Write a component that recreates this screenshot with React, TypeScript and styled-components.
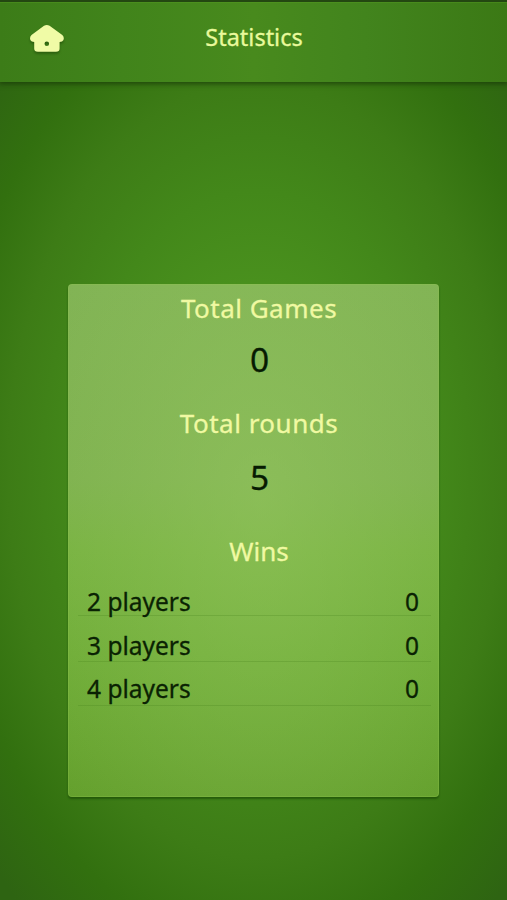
import React from "react";
import styled, { createGlobalStyle } from "styled-components";

const GlobalStyle = createGlobalStyle`
  * { box-sizing: border-box; }
  body { margin: 0; background: #3f7d18; }
`;

const Screen = styled.main`
  display: flex;
  flex-direction: column;
  width: 507px;
  height: 900px;
  overflow: hidden;
  font-family: "Noto Sans", "Open Sans", sans-serif;
  -webkit-text-stroke: 0.3px currentColor;
  background: radial-gradient(ellipse 365px 570px at 256px 470px,
    #559c25 0%, #4c941f 25%, #43881a 49%, #3d7c16 68%, #32700f 84%, #2e6412 100%);
`;

const Header = styled.header`
  display: grid;
  grid-template-columns: 94px 1fr 94px;
  flex: none;
  height: 82px;
  border-top: 2px solid #234711;
  background: linear-gradient(90deg, #3c7c18 0%, #41841b 24%, #488a1d 50%, #42841d 72%, #3b7915 100%);
  box-shadow: inset 0 1px 0 rgba(90, 160, 35, 0.35), 0 1px 5px 1px rgba(24, 55, 8, 0.75);
`;

const HomeButton = styled.button`
  display: flex;
  align-items: flex-start;
  padding: 21px 0 0 28px;
  border: 0;
  background: none;
  svg { filter: drop-shadow(0 2px 1px rgba(30, 70, 5, 0.55)); }
`;

const Title = styled.h1`
  margin: 0;
  padding: 17px 0 0 1px;
  text-align: center;
  font-size: 23.5px;
  font-weight: 400;
  line-height: 36px;
  color: #e9f99b;
`;

const Card = styled.section`
  display: flex;
  flex-direction: column;
  width: 371px;
  height: 513px;
  margin: 202px 0 0 68px;
  padding: 0 8px 0 10px;
  border-radius: 4px;
  background:
    radial-gradient(ellipse 270px 430px at 194px 215px, rgba(151, 200, 98, 0.55), rgba(151, 200, 98, 0) 100%),
    linear-gradient(180deg, #80b254 0%, #7db04e 38%, #76b13f 52%, #6eac36 72%, #64a02d 100%);
  box-shadow: inset 0 0 0 1px rgba(145, 200, 80, 0.3), 0 2px 2px rgba(25, 75, 5, 0.7);
`;

const Label = styled.h2<{ $height: number; $spacing?: number }>`
  margin: 0;
  padding-left: 9px;
  height: ${(p) => p.$height}px;
  text-align: center;
  font-size: 26px;
  font-weight: 400;
  line-height: 48px;
  letter-spacing: ${(p) => p.$spacing ?? 0}px;
  color: #f0f9a2;
`;

const Value = styled.div<{ $height: number }>`
  height: ${(p) => p.$height}px;
  padding-left: 10px;
  text-align: center;
  font-size: 33.5px;
  line-height: 48px;
  color: #071b02;
`;

const Row = styled.div<{ $height: number; $line: number }>`
  display: flex;
  justify-content: space-between;
  height: ${(p) => p.$height}px;
  padding: 0 12px 0 9px;
  border-bottom: 1px solid rgba(65, 125, 25, 0.24);
  font-size: 24.5px;
  line-height: ${(p) => p.$line}px;
  color: #0a2203;
`;

const wins = [
  { name: "2 players", count: 0, height: 41, line: 54 },
  { name: "3 players", count: 0, height: 46, line: 60 },
  { name: "4 players", count: 0, height: 44, line: 54 },
];

export default function App() {
  return (
    <>
      <GlobalStyle />
      <Screen>
        <Header>
          <HomeButton aria-label="Home">
            <svg width="38" height="33" viewBox="0 0 38 33">
              <path
                fillRule="evenodd"
                fill="#f0fba6"
                d="M16 2.8Q18.8 1 21.6 2.8L34.3 12.1Q36.7 14.3 35.3 17.2Q34.6 18.7 31.6 18.9V25.5Q31.6 28.8 28 28.8H9.8Q6.2 28.8 6.2 25.5V18.9Q3.3 18.7 2.5 17.2Q1.2 14.3 3.5 12.1ZM18.8 18.4A2.3 2.3 0 1 0 18.8 23A2.3 2.3 0 1 0 18.8 18.4Z"
              />
            </svg>
          </HomeButton>
          <Title>Statistics</Title>
        </Header>
        <Card>
          <Label $height={51} $spacing={0.5}>Total Games</Label>
          <Value $height={64}>0</Value>
          <Label $height={54} $spacing={0.5}>Total rounds</Label>
          <Value $height={74}>5</Value>
          <Label $height={48}>Wins</Label>
          {wins.map((w) => (
            <Row key={w.name} $height={w.height} $line={w.line}>
              <span>{w.name}</span>
              <span>{w.count}</span>
            </Row>
          ))}
        </Card>
      </Screen>
    </>
  );
}
